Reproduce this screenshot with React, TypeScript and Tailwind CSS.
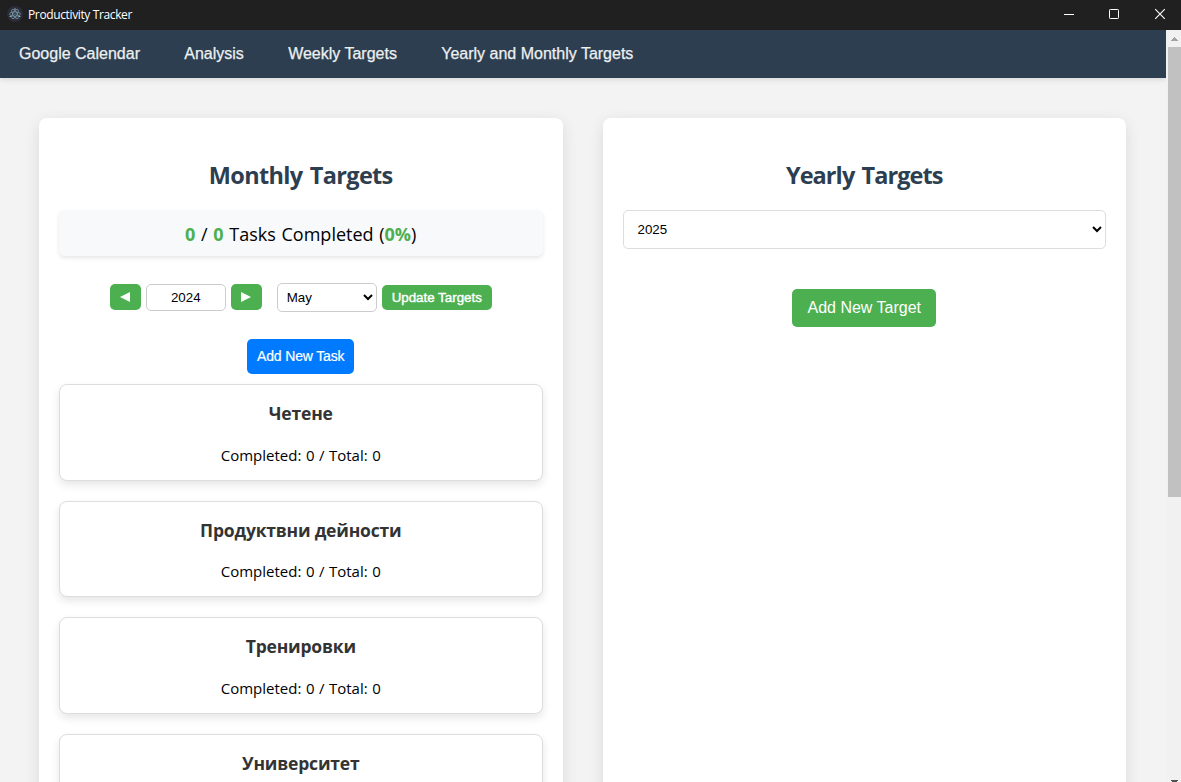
import React from "react";

const NAV = ["Google Calendar", "Analysis", "Weekly Targets", "Yearly and Monthly Targets"];
const TASKS = ["Четене", "Продуктвни дейности", "Тренировки", "Университет"];

function ElectronIcon() {
  return (
    <svg width="16" height="16" viewBox="0 0 16 16" fill="none">
      <circle cx="8" cy="8" r="8" fill="#2b2e3a" />
      <g stroke="#9fcbd8" strokeWidth="0.6" opacity="0.85">
        <ellipse cx="8" cy="8" rx="5.3" ry="2.1" />
        <ellipse cx="8" cy="8" rx="5.3" ry="2.1" transform="rotate(60 8 8)" />
        <ellipse cx="8" cy="8" rx="5.3" ry="2.1" transform="rotate(120 8 8)" />
      </g>
      <g fill="#9fcbd8">
        <circle cx="8" cy="8" r="0.6" />
        <circle cx="3.3" cy="10.4" r="0.7" />
        <circle cx="12.7" cy="10.4" r="0.7" />
        <circle cx="8" cy="2.9" r="0.7" />
      </g>
    </svg>
  );
}

function TitleBar() {
  return (
    <header className="flex h-[30px] shrink-0 items-center bg-[#202020] pl-[7px] text-white">
      <div className="-mt-0.5"><ElectronIcon /></div>
      <span className="ml-[5px] flex-1 font-['Open_Sans',sans-serif] text-[12px] leading-4 tracking-[-0.37px]">
        Productivity Tracker
      </span>
      <svg width="136" height="30" viewBox="0 0 136 30" fill="none" stroke="#fff">
        <path d="M19 14.5h10" />
        <rect x="64.5" y="9.5" width="9" height="9" rx="0.8" />
        <path d="M110.2 9.2l9.6 9.6M119.8 9.2l-9.6 9.6" strokeWidth="1.1" />
      </svg>
    </header>
  );
}

function TaskCard({ name }: { name: string }) {
  return (
    <article className="h-[96.6px] shrink-0 rounded-lg border border-[#ddd] bg-white pt-[15px] text-center shadow-[0_4px_8px_rgba(0,0,0,0.1)]">
      <h3 className="text-[17.5px] leading-[26px] font-bold tracking-[-0.2px] text-[#333]">{name}</h3>
      <p className="mt-[17.6px] text-[15px] leading-[22px] text-black [word-spacing:0.6px]">Completed: 0 / Total: 0</p>
    </article>
  );
}

function ScrollBar() {
  return (
    <div className="flex w-[15px] shrink-0 flex-col items-end bg-[#f1f1f1]">
      <div className="flex h-[17px] w-[13px] items-center justify-center">
        <svg width="7" height="4" viewBox="0 0 7 4" shapeRendering="crispEdges"><path d="M3 0h1v1h1v1h1v1h1v1H0V3h1V2h1V1h1z" fill="#a3a3a3" /></svg>
      </div>
      <div className="h-[450px] w-[13px] bg-[#c1c1c1]" />
      <div className="flex flex-1 items-end justify-center self-stretch pl-[2px]">
        <svg width="7" height="2" viewBox="0 0 7 2"><path d="M0 0h7v1H6v1H1V1H0z" fill="#505050" /></svg>
      </div>
    </div>
  );
}

export default function App() {
  return (
    <div className="flex h-[782px] w-[1181px] flex-col overflow-hidden bg-[#f3f3f3] font-['Open_Sans',sans-serif]">
      <TitleBar />
      <div className="flex min-h-0 flex-1">
        <div className="flex min-w-0 flex-1 flex-col overflow-hidden">
          <nav className="flex h-12 shrink-0 items-center gap-[44.3px] bg-[#2c3e50] pl-[19px] font-['Liberation_Sans',sans-serif] text-[16px] leading-[18px] text-[#ecf0f1] shadow-[0_2px_5px_rgba(0,0,0,0.1)] [-webkit-text-stroke:0.25px_#ecf0f1]">
            {NAV.map((n) => <a key={n} href="#" className="-mt-px">{n}</a>)}
          </nav>

          <main className="flex min-h-0 flex-1 gap-10 pt-10 pr-10 pl-[39px]">
            <section className="flex h-[900px] flex-1 flex-col rounded-lg bg-white px-5 pt-[39px] shadow-[0_4px_15px_rgba(0,0,0,0.1)]">
              <h2 className="h-9 text-center text-[23.5px] leading-9 font-bold tracking-[-0.68px] text-[#2c3e50] [word-spacing:2px]">Monthly Targets</h2>
              <div className="mt-[17px] h-[46px] shrink-0 rounded-md bg-[#f8f9fb] pt-px text-center text-[18px] leading-[46px] text-black shadow-[0_2px_4px_rgba(0,0,0,0.1)] [word-spacing:1px]">
                <b className="text-[#4caf50]">0</b> / <b className="text-[#4caf50]">0</b>{" "}
                Tasks Completed (<b className="text-[#4caf50]">0%</b>)
              </div>

              <div className="mt-[27px] flex h-[29px] items-start justify-center font-['Liberation_Sans',sans-serif] text-[13.333px]">
                <button className="mt-px flex h-[26px] w-[31px] items-center justify-center rounded-[5px] bg-[#4caf50]" aria-label="Previous year">
                  <svg width="10" height="10" viewBox="0 0 10 10"><path d="M0 5L10 0v10z" fill="#fff" /></svg>
                </button>
                <input className="mt-px ml-[5px] h-[27px] w-20 rounded-[5px] border border-[#ccc] bg-white pb-px text-center text-[13.333px] text-black" defaultValue="2024" />
                <button className="mt-px ml-[5px] flex h-[26px] w-[31px] items-center justify-center rounded-[5px] bg-[#4caf50]" aria-label="Next year">
                  <svg width="10" height="10" viewBox="0 0 10 10"><path d="M10 5L0 0v10z" fill="#fff" /></svg>
                </button>
                <select className="ml-[15px] h-[29px] w-[100px] rounded-[5px] border border-[#ccc] bg-white pl-[5px] text-[13.333px] text-black" defaultValue="May">
                  <option>May</option>
                </select>
                <button className="mt-[2px] ml-[5px] h-[25px] w-[110px] rounded-[5px] bg-[#4caf50] text-[13.333px] whitespace-nowrap text-white [-webkit-text-stroke:0.4px_#fff]">Update Targets</button>
              </div>

              <button className="mt-[27px] h-[35px] w-[107px] shrink-0 self-center rounded-[5px] bg-[#007bff] font-['Liberation_Sans',sans-serif] text-[14px] tracking-[-0.15px] text-white [-webkit-text-stroke:0.2px_#fff]">
                Add New Task
              </button>

              <div className="mt-[10px] flex flex-col gap-5">
                {TASKS.map((t) => <TaskCard key={t} name={t} />)}
              </div>
            </section>

            <section className="flex h-[900px] flex-1 flex-col rounded-lg bg-white px-5 pt-[39px] shadow-[0_4px_15px_rgba(0,0,0,0.1)]">
              <h2 className="h-9 text-center text-[23.5px] leading-9 font-bold tracking-[-0.92px] text-[#2c3e50] [word-spacing:2px]">Yearly Targets</h2>
              <select className="mt-[17px] h-[39px] w-full shrink-0 rounded-[5px] border border-[#ddd] bg-white pl-[10px] font-['Liberation_Sans',sans-serif] text-[13.333px] text-black" defaultValue="2025">
                <option>2025</option>
              </select>
              <button className="mt-10 h-[38px] w-36 shrink-0 self-center rounded-[5px] bg-[#4caf50] font-['Liberation_Sans',sans-serif] text-[16px] text-white">
                Add New Target
              </button>
            </section>
          </main>
        </div>
        <ScrollBar />
      </div>
    </div>
  );
}
